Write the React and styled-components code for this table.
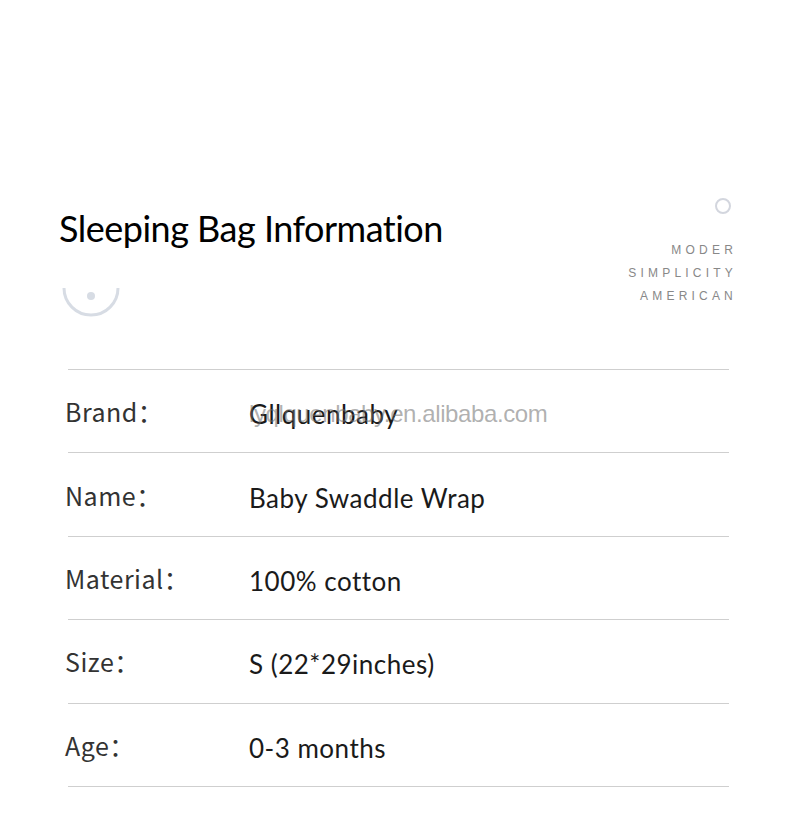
import styled, { createGlobalStyle } from 'styled-components';

const GlobalStyle = createGlobalStyle`
  html, body {
    margin: 0;
    padding: 0;
    background: #fff;
  }
  body {
    font-family: "Lato", "Liberation Sans", sans-serif;
    color: #111;
  }
`;

const rows = [
  { label: 'Brand', value: 'Gllquenbaby', watermark: true },
  { label: 'Name', value: 'Baby Swaddle Wrap' },
  { label: 'Material', value: '100% cotton' },
  { label: 'Size', value: 'S (22*29inches)' },
  { label: 'Age', value: '0-3 months' },
];

function SmileMark() {
  return (
    <svg width="60" height="40" viewBox="0 0 60 40">
      <path d="M3 8 A27 27 0 0 0 57 8" fill="none" stroke="#d7dce4" strokeWidth="3" />
      <circle cx="30" cy="16" r="4" fill="#d7dce4" />
    </svg>
  );
}

function App() {
  return (
    <>
      <GlobalStyle />
      <Page>
        <Header>
          <TitleBlock>
            <Title>Sleeping Bag Information</Title>
            <MarkWrap>
              <SmileMark />
            </MarkWrap>
          </TitleBlock>
          <Tagline>
            <Ring />
            <TagText>
              <span>MODER</span>
              <span>SIMPLICITY</span>
              <span>AMERICAN</span>
            </TagText>
          </Tagline>
        </Header>
        <Table>
          {rows.map((r) => (
            <Row key={r.label}>
              <Label>{r.label}：</Label>
              <Value>
                {r.value}
                {r.watermark && <Watermark>lyqlquenbaby.en.alibaba.com</Watermark>}
              </Value>
            </Row>
          ))}
        </Table>
      </Page>
    </>
  );
}

export default App;

const Page = styled.div`
  width: 790px;
  height: 839px;
  padding-top: 196px;
  box-sizing: border-box;
  overflow: hidden;
`;

const Header = styled.div`
  display: flex;
  justify-content: space-between;
  align-items: flex-start;
  padding: 0 57px 0 59px;
`;

const TitleBlock = styled.div`
  display: flex;
  flex-direction: column;
`;

const Title = styled.h1`
  margin: 0;
  font-family: "Lato", "Liberation Sans", sans-serif;
  font-weight: 400;
  font-size: 36px;
  line-height: 64px;
  color: #000;
  letter-spacing: -0.5px;
`;

const MarkWrap = styled.div`
  margin: 20px 0 0 2px;
  line-height: 0;
`;

const Tagline = styled.div`
  display: flex;
  flex-direction: column;
  align-items: flex-end;
  padding-top: 2px;
`;

const Ring = styled.div`
  width: 12px;
  height: 12px;
  border: 2px solid #d3d6de;
  border-radius: 50%;
  margin-right: 2px;
`;

const TagText = styled.div`
  display: flex;
  flex-direction: column;
  align-items: flex-end;
  margin-top: 25px;
  font-family: "Liberation Sans", sans-serif;
  font-size: 12px;
  line-height: 23px;
  letter-spacing: 4.2px;
  color: #888;
  margin-right: -4px;
`;

const Table = styled.div`
  margin: 49px 61px 0 68px;
  border-bottom: 1px solid #cfcfcf;
`;

const Row = styled.div`
  display: grid;
  grid-template-columns: 181px 1fr;
  align-items: center;
  height: 83.4px;
  border-top: 1px solid #cfcfcf;
  box-sizing: border-box;
`;

const Label = styled.div`
  margin: 0 0 0 -3px;
  font-family: "Noto Sans CJK SC", "Noto Sans", sans-serif;
  font-weight: 400;
  font-size: 25px;
  color: #333;
  letter-spacing: 0.5px;
`;

const Value = styled.div`
  position: relative;
  margin-top: 6px;
  font-family: "Lato", "Liberation Sans", sans-serif;
  font-size: 26px;
  color: #1a1a1a;
  letter-spacing: 0.5px;
`;

const Watermark = styled.span`
  position: absolute;
  left: 0;
  top: 50%;
  transform: translateY(-50%);
  font-family: "Liberation Sans", sans-serif;
  font-size: 24px;
  color: rgba(110, 110, 110, 0.55);
  white-space: nowrap;
  letter-spacing: -0.4px;
`;
